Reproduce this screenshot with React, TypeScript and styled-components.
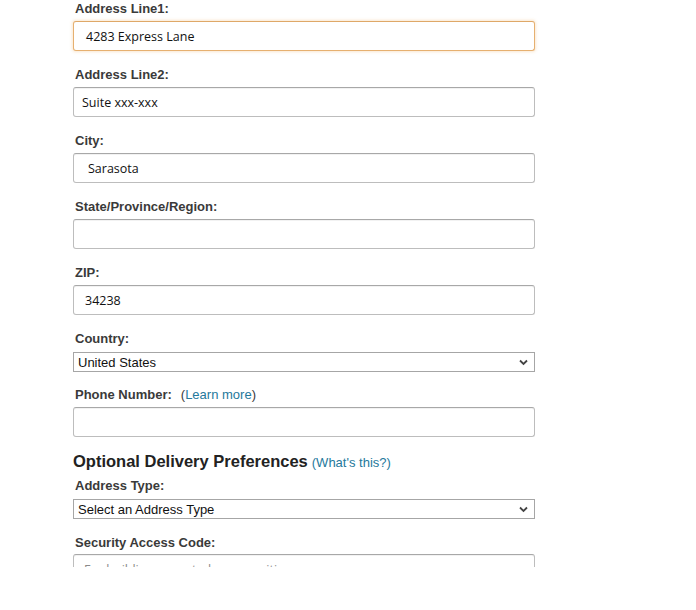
import React from "react";
import styled, { createGlobalStyle } from "styled-components";

const Global = createGlobalStyle`
  html, body { margin: 0; padding: 0; background: #fff; }
  body { font-family: Arial, "Liberation Sans", sans-serif; }
`;

const Page = styled.div`
  width: 696px;
  height: 567px;
  overflow: hidden;
  padding-left: 73px;
  box-sizing: border-box;
`;

const Form = styled.div`
  width: 462px;
  display: flex;
  flex-direction: column;
  padding-top: 1px;
`;

const Field = styled.div<{ $gap?: number; $after?: number }>`
  display: flex;
  flex-direction: column;
  gap: ${(p) => p.$gap ?? 4}px;
  margin-bottom: ${(p) => p.$after ?? 16}px;
`;

const Label = styled.label`
  display: block;
  padding-left: 2px;
  font-family: "Liberation Sans", Arial, sans-serif;
  font-weight: bold;
  font-size: 13px;
  line-height: 16px;
  color: #3a3a3a;
`;

const Hint = styled.span`
  font-weight: normal;
  margin-left: 9px;
  color: #3a3a3a;
`;

const Link = styled.a`
  color: #25799c;
  text-decoration: none;
`;

const TextBox = styled.div<{ $focus?: boolean; $indent?: number }>`
  box-sizing: border-box;
  height: 30px;
  border: 1px solid ${(p) => (p.$focus ? "#e6b070" : "#bdbdbd")};
  border-top-color: ${(p) => (p.$focus ? "#dfa868" : "#a8a8a8")};
  border-radius: 3px;
  box-shadow: ${(p) =>
    p.$focus
      ? "0 0 3px 1px rgba(240, 175, 100, 0.3)"
      : "inset 0 1px 0 rgba(0,0,0,0.05)"};
  background: #fff;
  display: flex;
  align-items: center;
  padding-left: ${(p) => p.$indent ?? 12}px;
  font-family: "Open Sans", "Noto Sans", sans-serif;
  font-size: 12.5px;
  color: #111;
  overflow: hidden;
  white-space: nowrap;
`;

const Placeholder = styled.span`
  color: #8a8a8a;
`;

const Select = styled.div`
  box-sizing: border-box;
  height: 20px;
  border: 1px solid #a6a6a6;
  background: #fff;
  display: flex;
  align-items: center;
  justify-content: space-between;
  padding: 0 4px 0 4px;
  font-family: "Liberation Sans", Arial, sans-serif;
  font-size: 13px;
  color: #111;
`;

const Chevron = styled.svg`
  width: 9px;
  height: 7px;
  margin-right: 2px;
`;

const Heading = styled.h2`
  margin: 14px 0 5px 0;
  font-family: "Liberation Sans", Arial, sans-serif;
  font-weight: bold;
  font-size: 16.5px;
  line-height: 20px;
  color: #222;
`;

const HeadLink = styled(Link)`
  font-weight: normal;
  font-size: 13px;
  margin-left: 4px;
`;

const Arrow = () => (
  <Chevron viewBox="0 0 9 7">
    <path d="M1 1.5 L4.5 5 L8 1.5" fill="none" stroke="#444" strokeWidth="1.8" />
  </Chevron>
);

export default function App() {
  return (
    <>
      <Global />
      <Page>
        <Form>
          <Field>
            <Label>Address Line1:</Label>
            <TextBox $focus $indent={12}>4283 Express Lane</TextBox>
          </Field>
          <Field>
            <Label>Address Line2:</Label>
            <TextBox $indent={8}>Suite xxx-xxx</TextBox>
          </Field>
          <Field>
            <Label>City:</Label>
            <TextBox $indent={14}>Sarasota</TextBox>
          </Field>
          <Field>
            <Label>State/Province/Region:</Label>
            <TextBox />
          </Field>
          <Field>
            <Label>ZIP:</Label>
            <TextBox $indent={11}>34238</TextBox>
          </Field>
          <Field $gap={5} $after={15}>
            <Label>Country:</Label>
            <Select>
              <span>United States</span>
              <Arrow />
            </Select>
          </Field>
          <Field $after={0}>
            <Label>
              Phone Number:
              <Hint>
                (<Link href="#">Learn more</Link>)
              </Hint>
            </Label>
            <TextBox />
          </Field>
          <Heading>
            Optional Delivery Preferences
            <HeadLink href="#">(What's this?)</HeadLink>
          </Heading>
          <Field $gap={5} $after={16}>
            <Label>Address Type:</Label>
            <Select>
              <span>Select an Address Type</span>
              <Arrow />
            </Select>
          </Field>
          <Field $gap={3}>
            <Label>Security Access Code:</Label>
            <TextBox $indent={10}>
              <Placeholder>For buildings or gated communities</Placeholder>
            </TextBox>
          </Field>
        </Form>
      </Page>
    </>
  );
}
